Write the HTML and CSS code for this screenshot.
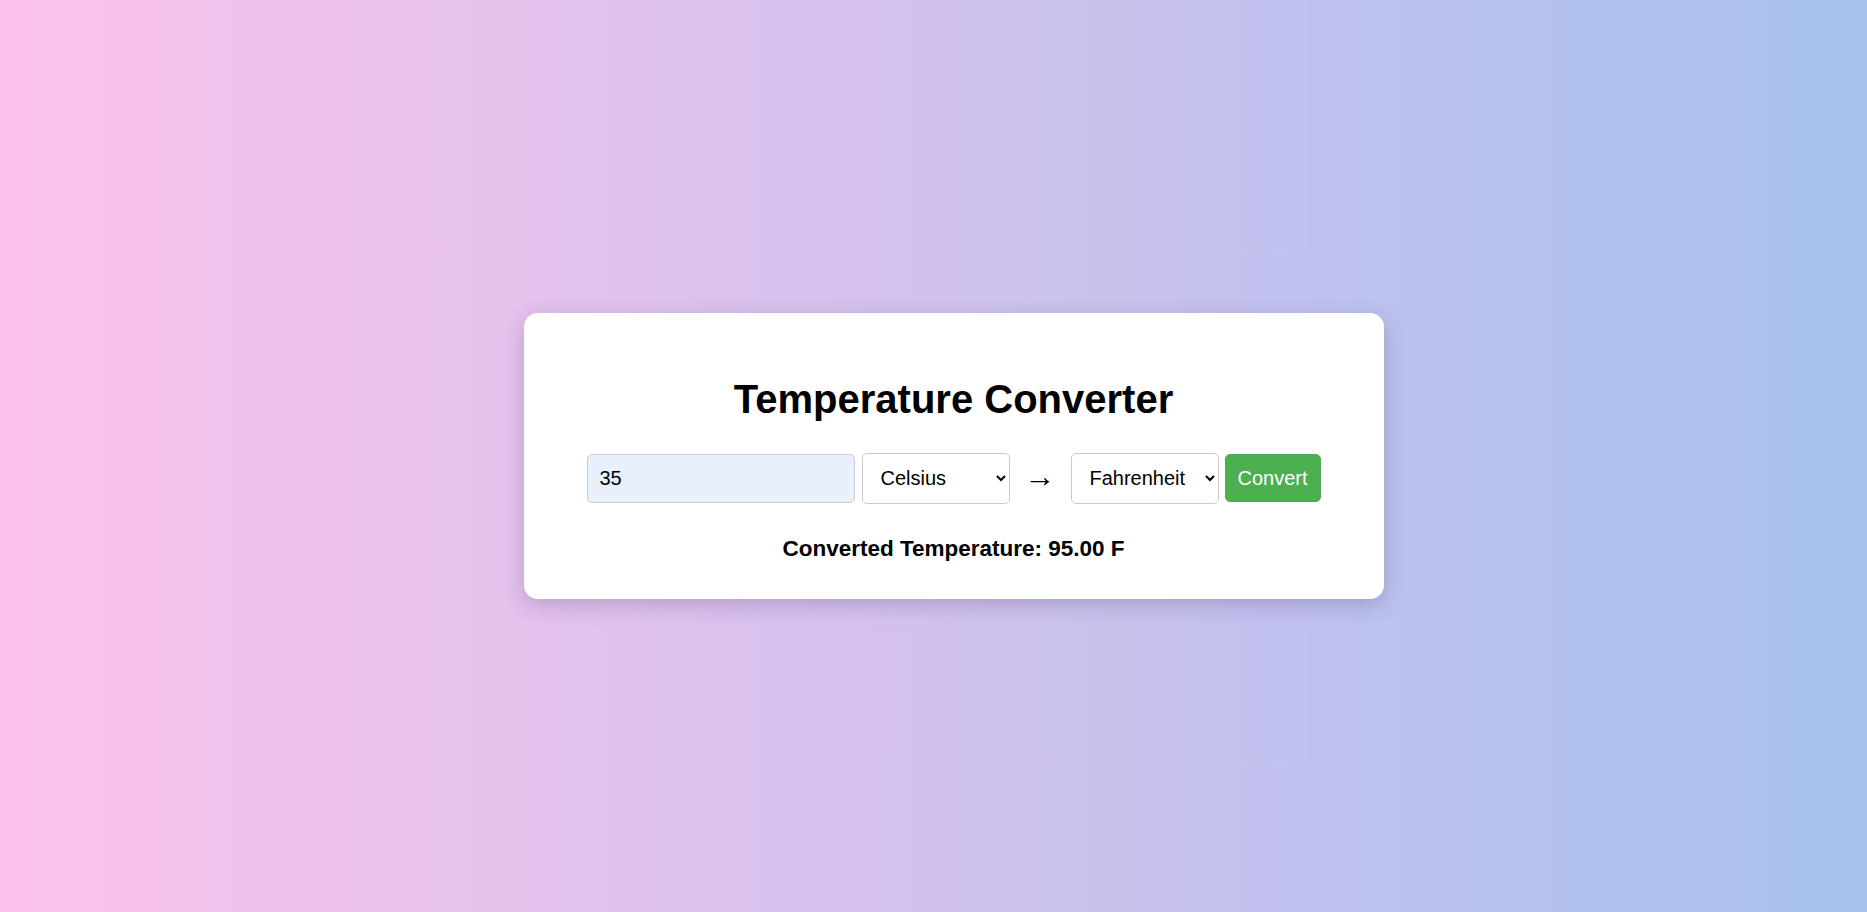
FILE: index.html
```html
<!DOCTYPE html>
<html lang="en">
<head>
<meta charset="utf-8">
<title>Temperature Converter</title>
<link rel="stylesheet" href="styles.css">
</head>
<body>
<main class="page">
  <section class="card">
    <h1 class="title">Temperature Converter</h1>
    <div class="row">
      <input class="field" type="number" value="35">
      <select class="unit">
        <option selected>Celsius</option>
        <option>Fahrenheit</option>
        <option>Kelvin</option>
      </select>
      <span class="arrow">→</span>
      <select class="unit">
        <option>Celsius</option>
        <option selected>Fahrenheit</option>
        <option>Kelvin</option>
      </select>
      <button class="convert" type="button">Convert</button>
    </div>
    <p class="result">Converted Temperature: 95.00 F</p>
  </section>
</main>
</body>
</html>
```
FILE: styles.css
```css
html, body {
  margin: 0;
  height: 100%;
}

body {
  font-family: "Liberation Sans", Arial, sans-serif;
  background: linear-gradient(to right, #fbc2eb, #a6c1ee);
  color: #000;
}

.page {
  height: 100vh;
  box-sizing: border-box;
  padding-left: 40px;
  display: flex;
  align-items: center;
  justify-content: center;
}

.card {
  width: 860px;
  box-sizing: border-box;
  padding: 63px 40px 37px;
  background: #fff;
  border-radius: 14px;
  box-shadow: 0 6px 20px rgba(60, 30, 90, 0.22);
  text-align: center;
}

.title {
  margin: 0 0 31px;
  font-size: 40px;
  line-height: 46px;
  font-weight: 700;
}

.row {
  display: flex;
  align-items: center;
  justify-content: center;
  height: 50px;
  margin-bottom: 33px;
}

.field {
  width: 268px;
  height: 49px;
  box-sizing: border-box;
  padding: 0 12px;
  font-family: inherit;
  font-size: 20px;
  color: #000;
  background: #e8f0fe;
  border: 1px solid #ccc;
  border-radius: 5px;
  outline: none;
  -moz-appearance: textfield;
}

.field::-webkit-outer-spin-button,
.field::-webkit-inner-spin-button {
  -webkit-appearance: none;
  margin: 0;
}

.unit {
  width: 148px;
  height: 51px;
  box-sizing: border-box;
  padding: 0 8px 0 14px;
  font-family: inherit;
  font-size: 20px;
  color: #000;
  background: #fff;
  border: 1px solid #ccc;
  border-radius: 5px;
}

.field + .unit {
  margin-left: 7px;
}

.arrow {
  width: 61px;
  font-size: 31px;
  line-height: 1;
  text-align: center;
  transform: translateY(-2px);
}

.convert {
  margin-left: 6px;
  width: 96px;
  height: 48px;
  box-sizing: border-box;
  padding: 0 12px;
  font-family: inherit;
  font-size: 20px;
  color: #fff;
  background: #4caf50;
  border: 1px solid #4cae50;
  border-radius: 5px;
}

.result {
  margin: 0;
  font-size: 22.5px;
  line-height: 26px;
  font-weight: 700;
}
```
